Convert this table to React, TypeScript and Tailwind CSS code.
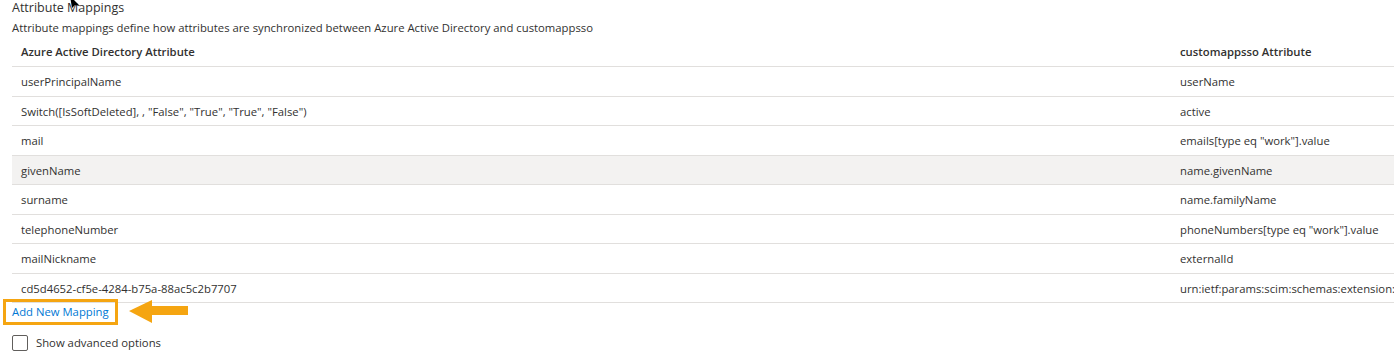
import React from "react";

const rows: [string, string][] = [
  ["userPrincipalName", "userName"],
  ['Switch([IsSoftDeleted], , "False", "True", "True", "False")', "active"],
  ["mail", 'emails[type eq "work"].value'],
  ["givenName", "name.givenName"],
  ["surname", "name.familyName"],
  ["telephoneNumber", 'phoneNumbers[type eq "work"].value'],
  ["mailNickname", "externalId"],
  ["cd5d4652-cf5e-4284-b75a-88ac5c2b7707", "urn:ietf:params:scim:schemas:extension:microsoft:2.0:User:employeeNumber"],
];

export default function App() {
  return (
    <div
      className="relative w-[1394px] h-[359px] overflow-hidden bg-white text-[#323130]"
      style={{ fontFamily: '"Open Sans", "Noto Sans", sans-serif' }}
    >
      <svg className="absolute left-[68px] top-[-4px]" width="14" height="12" viewBox="0 0 14 12">
        <path d="M2 0 L12 10 L7 9 L4 12 Z" fill="#000" />
        <path d="M0 -2 L6 4" stroke="#000" strokeWidth="2" />
      </svg>
      <div className="pl-[12px] pt-0">
        <div className="text-[12.5px] leading-[15px] text-[#323130]">Attribute Mappings</div>
        <div className="mt-[6px] text-[11.3px] leading-[14px]">
          Attribute mappings define how attributes are synchronized between Azure Active Directory and customappsso
        </div>
        <div className="mt-[2px] text-[11.3px]">
          <div className="flex h-[30px] items-center border-b border-[#e1dfdd] font-semibold pt-[1px]">
            <div className="w-[1168px] pl-[9px]">Azure Active Directory Attribute</div>
            <div className="flex-1 whitespace-nowrap">customappsso Attribute</div>
          </div>
          {rows.map(([a, b], i) => (
            <div
              key={i}
              className={`flex h-[29.5px] items-center border-b border-[#e1dfdd] pt-[3px] ${i === 3 ? "bg-[#f3f2f1]" : ""}`}
            >
              <div className="w-[1168px] pl-[9px] whitespace-nowrap">{a}</div>
              <div className="flex-1 min-w-0 whitespace-nowrap overflow-hidden">{b}</div>
            </div>
          ))}
        </div>
      </div>
      <div className="flex items-center mt-[-4px] pl-[3px]">
        <div className="border-[3px] border-[#f5a511] px-[6px] h-[26px] flex items-center">
          <span className="text-[11.3px] text-[#0078d4]">Add New Mapping</span>
        </div>
        <svg className="ml-[10px]" width="62" height="26" viewBox="0 0 62 26">
          <path d="M1 12 L24 1 L24 7 L60 7 L60 16 L24 16 L24 24 Z" fill="#f5a511" />
        </svg>
      </div>
      <div className="flex items-center pl-[12px] mt-[10px]">
        <div className="w-[16px] h-[16px] border border-[#605e5c] rounded-[2px]" />
        <span className="ml-[8px] text-[11.3px]">Show advanced options</span>
      </div>
    </div>
  );
}
